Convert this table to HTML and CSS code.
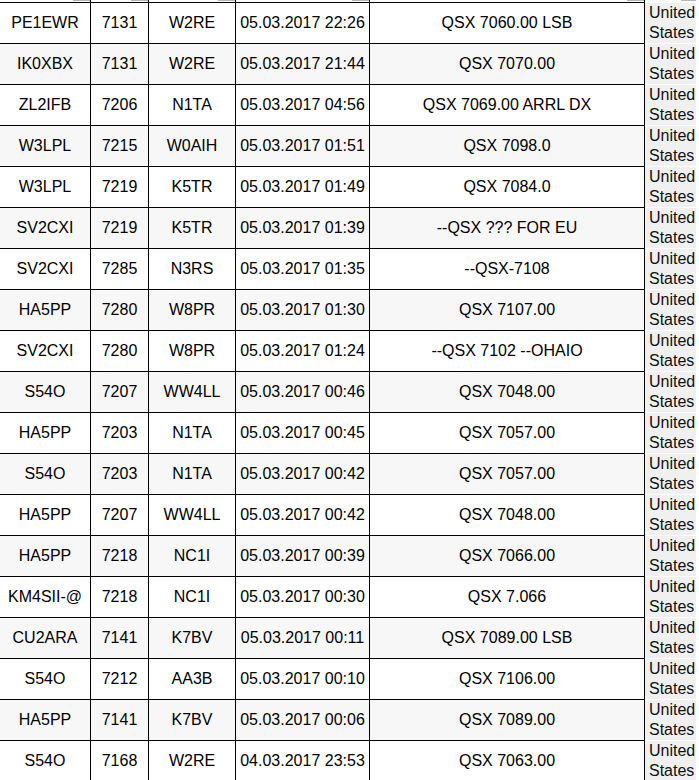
FILE: index.html
```html
<!DOCTYPE html>
<html>
<head>
<meta charset="utf-8">
<link rel="stylesheet" href="styles.css">
</head>
<body>
<table class="spots">
<thead>
<tr class="head">
<th class="c-dx"><span class="sort"></span></th>
<th class="c-freq"><span class="sort"></span></th>
<th class="c-spot"><span class="sort"></span></th>
<th class="c-time"><span class="sort"></span></th>
<th class="c-info"><span class="sort"></span></th>
<th class="c-country"><span class="sort"></span></th>
</tr>
</thead>
<tbody>
<tr><td>PE1EWR</td><td>7131</td><td>W2RE</td><td>05.03.2017 22:26</td><td>QSX 7060.00 LSB</td><td class="country">United States</td></tr>
<tr><td>IK0XBX</td><td>7131</td><td>W2RE</td><td>05.03.2017 21:44</td><td>QSX 7070.00</td><td class="country">United States</td></tr>
<tr><td>ZL2IFB</td><td>7206</td><td>N1TA</td><td>05.03.2017 04:56</td><td>QSX 7069.00 ARRL DX</td><td class="country">United States</td></tr>
<tr><td>W3LPL</td><td>7215</td><td>W0AIH</td><td>05.03.2017 01:51</td><td>QSX 7098.0</td><td class="country">United States</td></tr>
<tr><td>W3LPL</td><td>7219</td><td>K5TR</td><td>05.03.2017 01:49</td><td>QSX 7084.0</td><td class="country">United States</td></tr>
<tr><td>SV2CXI</td><td>7219</td><td>K5TR</td><td>05.03.2017 01:39</td><td>--QSX ??? FOR EU</td><td class="country">United States</td></tr>
<tr><td>SV2CXI</td><td>7285</td><td>N3RS</td><td>05.03.2017 01:35</td><td>--QSX-7108</td><td class="country">United States</td></tr>
<tr><td>HA5PP</td><td>7280</td><td>W8PR</td><td>05.03.2017 01:30</td><td>QSX 7107.00</td><td class="country">United States</td></tr>
<tr><td>SV2CXI</td><td>7280</td><td>W8PR</td><td>05.03.2017 01:24</td><td>--QSX 7102 --OHAIO</td><td class="country">United States</td></tr>
<tr><td>S54O</td><td>7207</td><td>WW4LL</td><td>05.03.2017 00:46</td><td>QSX 7048.00</td><td class="country">United States</td></tr>
<tr><td>HA5PP</td><td>7203</td><td>N1TA</td><td>05.03.2017 00:45</td><td>QSX 7057.00</td><td class="country">United States</td></tr>
<tr><td>S54O</td><td>7203</td><td>N1TA</td><td>05.03.2017 00:42</td><td>QSX 7057.00</td><td class="country">United States</td></tr>
<tr><td>HA5PP</td><td>7207</td><td>WW4LL</td><td>05.03.2017 00:42</td><td>QSX 7048.00</td><td class="country">United States</td></tr>
<tr><td>HA5PP</td><td>7218</td><td>NC1I</td><td>05.03.2017 00:39</td><td>QSX 7066.00</td><td class="country">United States</td></tr>
<tr><td>KM4SII-@</td><td>7218</td><td>NC1I</td><td>05.03.2017 00:30</td><td>QSX 7.066</td><td class="country">United States</td></tr>
<tr><td>CU2ARA</td><td>7141</td><td>K7BV</td><td>05.03.2017 00:11</td><td>QSX 7089.00 LSB</td><td class="country">United States</td></tr>
<tr><td>S54O</td><td>7212</td><td>AA3B</td><td>05.03.2017 00:10</td><td>QSX 7106.00</td><td class="country">United States</td></tr>
<tr><td>HA5PP</td><td>7141</td><td>K7BV</td><td>05.03.2017 00:06</td><td>QSX 7089.00</td><td class="country">United States</td></tr>
<tr><td>S54O</td><td>7168</td><td>W2RE</td><td>04.03.2017 23:53</td><td>QSX 7063.00</td><td class="country">United States</td></tr>
</tbody>
</table>
</body>
</html>
```
FILE: styles.css
```css
html, body {
  margin: 0;
  padding: 0;
  background: #fff;
}

body {
  font-family: "Liberation Sans", Arial, sans-serif;
  font-size: 16px;
  color: #000;
  overflow: hidden;
}

.spots {
  border-collapse: separate;
  border-spacing: 0;
  table-layout: fixed;
  width: 697px;
}

.spots th,
.spots td {
  box-sizing: border-box;
  border-right: 1px solid #000;
  border-bottom: 1px solid #000;
}

.head th {
  height: 3px;
  padding: 0;
  line-height: 0;
  font-size: 0;
  vertical-align: top;
}

.sort {
  display: block;
  width: 17px;
  height: 1px;
  margin-left: auto;
  background: #b4b4b4;
}

.c-dx { width: 91px; }
.c-freq { width: 58px; }
.c-spot { width: 87px; }
.c-time { width: 134px; }
.c-info { width: 275px; }
.c-country { width: 52px; }

.head th.c-country {
  border-right: 1px solid #fff;
  border-bottom-color: #fff;
}
.head th.c-country .sort {
  width: 15px;
}

.spots td {
  height: 41px;
  padding: 0 4px;
  text-align: center;
  vertical-align: middle;
  white-space: nowrap;
}

.spots tbody tr:nth-child(even) td {
  background: #f7f7f7;
}

.spots td.country {
  text-align: left;
  white-space: normal;
  line-height: 20px;
  padding: 0 1px 0 4px;
  background: #f0f0f0;
  border-right: 1px solid #fff;
  border-bottom: 1px solid #fff;
  color: #111;
}

.spots tbody tr:nth-child(even) td.country {
  background: #f0f0f0;
}
```
